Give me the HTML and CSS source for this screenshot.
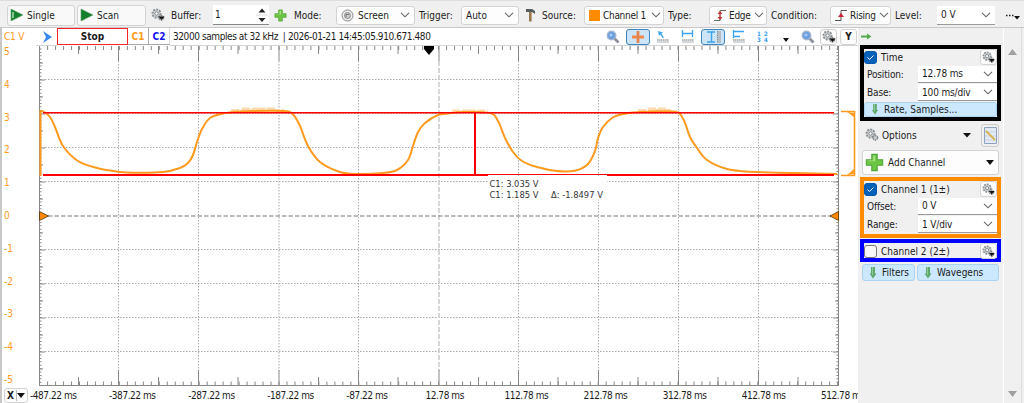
FILE: index.html
```html
<!DOCTYPE html>
<html lang="en">
<head>
  <meta charset="UTF-8">
  <meta name="viewport" content="width=device-width, initial-scale=1.0">
  <title>Scope</title>
  <link rel="stylesheet" href="styles.css">
</head>
<body>
  <svg class="defs">
    <symbol id="gear" viewBox="0 0 14 14">
      <circle cx="5.5" cy="5.5" r="4" fill="#d5d8da" stroke="#8c9296" stroke-width="2" stroke-dasharray="2 1"/>
      <circle cx="5.5" cy="5.5" r="1.7" fill="#fff" stroke="#7c8286"/>
      <circle cx="10.3" cy="9.8" r="2.3" fill="#ccc" stroke="#80868a" stroke-width="1.5" stroke-dasharray="1.5 .8"/>
    </symbol>
    <symbol id="gear-menu" viewBox="0 0 14 14">
      <use href="#gear"/>
      <path d="M7.5 8.5h6L10.5 12z" fill="#111"/>
    </symbol>
    <symbol id="chev" viewBox="0 0 10 6">
      <path d="M1 .8l4 4 4-4" fill="none" stroke="#666" stroke-width="1.1"/>
    </symbol>
    <symbol id="plus" viewBox="0 0 14 14">
      <path d="M5 1h4v4h4v4H9v4H5V9H1V5h4z" fill="#6cc644" stroke="#4fa53a" stroke-width=".8"/>
      <path d="M6 2h1.5v4H2V5.6h4z" fill="#a6e384"/>
    </symbol>
    <symbol id="down" viewBox="0 0 8 12">
      <path d="M2 0h4v6.5h1.5L4 11.5.5 6.5H2z" fill="#5fa86c"/>
      <path d="M3 0h1v8H3z" fill="#93cb9c"/>
    </symbol>
    <symbol id="lens" viewBox="0 0 14 14">
      <path d="M8.5 8.5l4 4" stroke="#8a8f98" stroke-width="2.6"/>
      <circle cx="5.5" cy="5.5" r="4.2" fill="#6a9de0" stroke="#a3b6cf" stroke-width="1.5"/>
      <circle cx="5" cy="5" r="1.6" fill="#a9cbf5"/>
    </symbol>
    <symbol id="play" viewBox="0 0 14 12">
      <path d="M1 0l12 6-12 6z" fill="#15802b" stroke="#5b9b66" stroke-width=".6"/>
    </symbol>
    <symbol id="ruler" viewBox="0 0 12 4">
      <path d="M0 0h12v4H0z" fill="#d5d8da"/>
      <path d="M0 1h12" stroke="#bbb" stroke-width="2" stroke-dasharray="1 1"/>
    </symbol>
  </svg>

  <div class="toolbar">
    <button class="btn single"><svg width="14" height="12"><use href="#play"/><path d="M3 3v6" stroke="#fff"/></svg>Single</button>
    <button class="btn scan"><svg width="14" height="12"><use href="#play"/></svg>Scan</button>
    <svg class="gear" width="14" height="14"><use href="#gear-menu"/></svg>
    <label class="l-buffer">Buffer:</label>
    <div class="spin"><span>1</span>
      <svg width="12" height="20"><path d="M2.5 7.5L6 3.5l3.5 4zM2.5 13L6 17l3.5-4z" fill="#222"/><path d="M0 10h12" stroke="#ddd"/></svg>
    </div>
    <svg class="add" width="13" height="13"><use href="#plus"/></svg>
    <label class="l-mode">Mode:</label>
    <div class="combo screen">
      <svg width="13" height="13"><circle cx="6.5" cy="6.5" r="5.5" fill="#eee" stroke="#888"/><circle cx="6.5" cy="6.5" r="3" fill="#ccc" stroke="#888"/><path d="M5 8V5.5h3" fill="none" stroke="#777"/></svg>
      <span>Screen</span><svg class="chev"><use href="#chev"/></svg>
    </div>
    <label class="l-trigger">Trigger:</label>
    <div class="combo auto"><span>Auto</span><svg class="chev"><use href="#chev"/></svg></div>
    <svg class="hammer" width="11" height="14"><path d="M1 1h6l3 2v3L7 4H1z" fill="#555c5c"/><path d="M4 4h2.6v9.5H4z" fill="#98764e"/></svg>
    <label class="l-source">Source:</label>
    <div class="combo source"><i class="swatch"></i><span>Channel 1</span><svg class="chev"><use href="#chev"/></svg></div>
    <label class="l-type">Type:</label>
    <div class="combo edge">
      <svg width="12" height="13"><path d="M0 11.5h6v-10h6" fill="none" stroke="#666"/><path d="M3.500 5L6 2l2.500 3zM3.500 8L6 11l2.500-3z" fill="#c33"/><path d="M6 3v7" stroke="#c33"/></svg>
      <span>Edge</span><svg class="chev"><use href="#chev"/></svg>
    </div>
    <label class="l-cond">Condition:</label>
    <div class="combo rising">
      <svg width="12" height="13"><path d="M0 11.5h6v-10h6" fill="none" stroke="#555"/><path d="M3 8l3-4 3 4z" fill="#c23"/></svg>
      <span>Rising</span><svg class="chev"><use href="#chev"/></svg>
    </div>
    <label class="l-level">Level:</label>
    <div class="combo level field"><span>0 V</span><svg class="chev"><use href="#chev"/></svg></div>
    <svg class="more" width="14" height="10"><path d="M0 5.5h1.5M3 5.5h1.5M6 5.5h1.5" stroke="#222" stroke-width="1.5"/><path d="M8 6h6l-3 3.5z" fill="#111"/></svg>
  </div>

  <div class="main">
    <div class="scope">
      <div class="status">
        <span class="unit">C1 V</span>
        <svg class="arrow" width="10" height="12"><path d="M0 0l9 6-9 6 3-6z" fill="#3a8af0"/></svg>
        <div class="stop">Stop</div>
        <div class="tab c1">C1</div>
        <div class="tab c2">C2</div>
        <span class="info">32000 samples at 32 kHz&nbsp; | 2026-01-21 14:45:05.910.671.480</span>
        <div class="tools">
          <svg width="14" height="14"><use href="#lens"/></svg>
          <span class="on"><svg width="14" height="14"><path d="M5.6 1h2.8v4.6H13v2.8H8.4V13H5.6V8.4H1V5.6h4.6z" fill="#f08848"/><path d="M7 1v12" stroke="#c08060" stroke-width=".6"/></svg></span>
          <svg class="t1" width="13" height="13"><path d="M2 1l5 1.5-1.7 1L8 7.5 6.7 8 4.3 4.5 3 6z" fill="#3ba4ec"/><use href="#ruler" x="1" y="9" width="12" height="4"/></svg>
          <svg class="t2" width="13" height="13"><path d="M1.5 0v7M11.5 0v7M2 3.5h9" stroke="#3ba4ec" stroke-width="1.3"/><use href="#ruler" x="1" y="9" width="12" height="4"/></svg>
          <span class="on t3"><svg width="15" height="14"><path d="M1 2h8M1 12h8M5.5 2v10" stroke="#3ba4ec" stroke-width="1.4"/><path d="M11 1h4v12h-4z" fill="#b4bcc4"/><path d="M11.5 1v12" stroke="#8b949c" stroke-dasharray="1 1"/></svg></span>
          <svg class="t4" width="13" height="13"><path d="M1.5 0v8M2 1.5h10M2 6.5h6" stroke="#3ba4ec" stroke-width="1.3"/><use href="#ruler" x="1" y="9" width="12" height="4"/></svg>
          <span class="nums"><b>1</b><b>2</b><b>3</b><b>4</b></span>
          <svg class="drop" width="6" height="4"><path d="M0 0h6L3 4z" fill="#111"/></svg>
          <svg class="t5" width="14" height="14"><use href="#lens"/></svg>
          <span class="mini"><svg width="14" height="14"><use href="#gear-menu"/></svg></span>
          <span class="mini y">Y</span>
        </div>
      </div>

      <div class="plot">
        <div class="y-axis">
          <span>5</span><span>4</span><span>3</span><span>2</span><span>1</span><span>0</span><span>-1</span><span>-2</span><span>-3</span><span>-4</span><span>-5</span>
        </div>
        <svg class="graph" width="822" height="343" viewBox="36 45 822 343">
          <path d="M36 45.5h21M170 45.5h688" stroke="#d4d4d4"/>
          <!-- dotted divisions -->
          <g stroke="#aaa" stroke-dasharray="1.5 1.5">
            <path d="M118.5 61v310M198.5 61v310M279 61v310M358.5 61v310M518.5 61v310M598.5 61v310M678.5 61v310M758.5 61v310"/>
            <path d="M45 79.5h788M45 113.5h788M45 147.5h788M45 181.5h788M45 249.5h788M45 283.5h788M45 317.5h788M45 351.5h788"/>
          </g>
          <path d="M439 61v310" stroke="#ccc" stroke-width="1.6" stroke-dasharray="5 2"/>
          <path d="M48 216h786" stroke="#a4a4a4" stroke-width="1.4" stroke-dasharray="4.5 2"/>
          <!-- ticks -->
          <g stroke="#888">
            <path d="M39.5 46v340M838.5 46v340M39 385.5h800" fill="none"/>
            <path d="M39.1 48h800M39.1 383.5h800" stroke-width="4" stroke-dasharray="1 6.98"/>
            <path d="M78.5 46v8M158.5 46v8M238 46v8M318.5 46v8M398 46v8M478.5 46v8M558 46v8M638 46v8M718 46v8M798 46v8"/>
            <path d="M78.5 377v8M158.5 377v8M238 377v8M318.5 377v8M398 377v8M478.5 377v8M558 377v8M638 377v8M718 377v8M798 377v8"/>
            <path d="M118.5 46v15M198.5 46v15M279 46v15M358.5 46v15M439 46v15M518.5 46v15M598.5 46v15M678.5 46v15M758.5 46v15"/>
            <path d="M118.5 370v15M198.5 370v15M279 370v15M358.5 370v15M439 370v15M518.5 370v15M598.5 370v15M678.5 370v15M758.5 370v15"/>
            <path d="M40.5 48.5v337M837.5 48.5v337" stroke-width="2" stroke-dasharray="1 2.4"/>
            <path d="M41.5 62.5v323M836.5 62.5v323" stroke-width="3" stroke-dasharray="1 33"/>
            <path d="M42.5 79.5v306M835.5 79.5v306" stroke-width="5" stroke-dasharray="1 33"/>
          </g>
          <!-- noise on the crests -->
          <g stroke="#ffd9ad" stroke-width="2" stroke-dasharray="8 2 14 1">
            <path d="M231 110h53M242 108.5h33M452 110.5h36M638 110h35M648 108.5h18"/>
          </g>
          <path d="M40.5 110v66" stroke="#ff9a1f" stroke-width="2"/>
          <path id="wave" fill="none" stroke="#ff9a1f" stroke-width="2"/>
          <path d="M43 112.7h791" stroke="#f00" stroke-width="1.6"/>
          <path d="M43 175h445M607 175h227" stroke="#f00" stroke-width="2"/>
          <path d="M488 174.5h119" stroke="#f00"/>
          <path d="M475 113v62" stroke="#f00" stroke-width="2"/>
          <path d="M841 111.5h13.5v64H841" fill="none" stroke="#ff9a1f" stroke-width="1.6"/>
          <path d="M847 112l7 1v4zM847 175l7-1v-5z" fill="#ff9a1f"/>
          <path d="M39.5 211.5v9l9-4.5zM838.5 211.5v9l-8.500-4.500z" fill="#f80" stroke="#553408" stroke-width=".8"/>
          <path d="M424 46h10v3l-5 6-5-6z"/>
          <g class="cursor-text">
            <rect x="488" y="176" width="119" height="24" fill="#fff"/>
            <text x="489.500" y="186.500">C1: 3.035 V</text>
            <text x="489.500" y="198">C1: 1.185 V</text>
            <text x="551" y="198">Δ: -1.8497 V</text>
          </g>
        </svg>
      </div>

      <div class="x-axis">
        <button class="x-btn"><span>X</span><svg width="8" height="5"><path d="M0 0h8L4 5z" fill="#111"/></svg></button>
        <div class="x-labels">
          <span>-487.22 ms</span><span>-387.22 ms</span><span>-287.22 ms</span><span>-187.22 ms</span><span>-87.22 ms</span><span>12.78 ms</span><span>112.78 ms</span><span>212.78 ms</span><span>312.78 ms</span><span>412.78 ms</span><span>512.78 ms</span>
        </div>
      </div>
    </div>

    <div class="side">
      <svg class="go" width="11" height="7"><path d="M0 2.500h6V.5l4.500 3L6 6.500v-2H0z" fill="#55a94e"/></svg>
      <div class="box time">
        <div class="head"><i class="check on"><svg width="11" height="11"><path d="M2.500 5.500l2 2L8.500 3.500" fill="none" stroke="#fff"/></svg></i>Time<span class="mini"><svg width="13" height="13"><use href="#gear-menu"/></svg></span></div>
        <div class="row"><label>Position:</label><div class="combo field"><span>12.78 ms</span><svg class="chev"><use href="#chev"/></svg></div></div>
        <div class="row"><label>Base:</label><div class="combo field"><span>100 ms/div</span><svg class="chev"><use href="#chev"/></svg></div></div>
        <button class="blue rate"><svg width="8" height="11"><use href="#down"/></svg>Rate, Samples...</button>
      </div>
      <div class="options">
        <svg width="14" height="14"><use href="#gear"/></svg><span>Options</span>
        <svg class="drop" width="8" height="5"><path d="M0 0h8L4 4.500z" fill="#111"/></svg>
        <span class="note"><svg width="13" height="17"><path d="M.5.5h12v16H.5z" fill="#e4eaf4" stroke="#8fa2bf"/><path d="M1 5h11M1 9h11M1 13h11" stroke="#c8d3e4"/><path d="M2 4l9 9" stroke="#d9b44a" stroke-width="1.8"/></svg></span>
      </div>
      <button class="add-channel"><svg width="19" height="19"><use href="#plus"/></svg><span>Add Channel</span><svg width="8" height="5"><path d="M0 0h8L4 5z" fill="#111"/></svg></button>
      <div class="box ch1">
        <div class="head"><i class="check on"><svg width="11" height="11"><path d="M2.500 5.500l2 2L8.500 3.500" fill="none" stroke="#fff"/></svg></i>Channel 1 (1±)<span class="mini"><svg width="13" height="13"><use href="#gear-menu"/></svg></span></div>
        <div class="row"><label>Offset:</label><div class="combo field"><span>0 V</span><svg class="chev"><use href="#chev"/></svg></div></div>
        <div class="row"><label>Range:</label><div class="combo field"><span>1 V/div</span><svg class="chev"><use href="#chev"/></svg></div></div>
      </div>
      <div class="box ch2">
        <div class="head"><i class="check"></i>Channel 2 (2±)<span class="mini"><svg width="13" height="13"><use href="#gear-menu"/></svg></span></div>
      </div>
      <div class="pair">
        <button class="blue"><svg width="8" height="12"><use href="#down"/></svg>Filters</button>
        <button class="blue wide"><svg width="8" height="12"><use href="#down"/></svg>Wavegens</button>
      </div>
    </div>
    <div class="scroll">
      <svg width="9" height="6"><path d="M0 6l4.500-6L9 6z" fill="#a0a0a0"/></svg>
      <svg width="9" height="6"><path d="M0 0h9L4.500 6z" fill="#a0a0a0"/></svg>
    </div>
  </div>
  <script src="script.js"></script>
</body>
</html>
```
FILE: styles.css
```css
* {
  box-sizing: border-box;
}
body {
  margin: 0;
  width: 1024px;
  height: 403px;
  display: flex;
  flex-direction: column;
  overflow: hidden;
  background: #f0f0f0;
  font-family: "DejaVu Sans Condensed", "DejaVu Sans", sans-serif;
  font-stretch: condensed;
  font-size: 10px;
  color: #1c1c1c;
}
svg {
  display: block;
  flex: none;
}
.defs {
  position: absolute;
  width: 0;
  height: 0;
}
button {
  font: inherit;
  color: inherit;
  padding: 0;
  border: 1px solid #d3d3d3;
  border-radius: 3px;
  background: #fdfdfd;
  display: flex;
  align-items: center;
}
label {
  flex: none;
  white-space: nowrap;
}

/* Toolbar */
.toolbar {
  height: 28px;
  flex: none;
  display: flex;
  align-items: center;
  padding: 2px 0 0 7px;
  border-top: 1px solid #ddd;
  border-bottom: 1px solid #c8c8c8;
}
.btn {
  height: 21px;
  width: 68px;
  padding-left: 2px;
  gap: 3px;
  background: #f9f9f9;
}
.scan { margin-left: 2px; width: 69px; }
.gear { margin-left: 5px; }
.l-buffer { margin-left: 6px; width: 42px; }
.spin {
  width: 56px;
  height: 20px;
  padding: 0 1px 0 2px;
  display: flex;
  align-items: center;
  justify-content: space-between;
  background: #fff;
  border-bottom: 1px solid #888;
}
.add { margin-left: 5px; }
.l-mode { margin-left: 7px; width: 42px; }
.l-trigger { margin-left: 4px; width: 42px; }
.hammer { margin-left: 6px; }
.l-source { margin-left: 6px; width: 42px; }
.l-type { margin-left: 4px; width: 41px; }
.l-cond { margin-left: 4px; width: 59px; }
.l-level { margin-left: 4px; width: 42px; }
.combo {
  flex: none;
  height: 19px;
  display: flex;
  align-items: center;
  gap: 4px;
  padding: 0 4px 0 4px;
  background: #fdfdfd;
  border: 1px solid #d3d3d3;
  border-radius: 3px;
}
.combo span {
  flex: 1;
  white-space: nowrap;
}
.chev {
  width: 10px;
  height: 6px;
}
.field {
  background: #fff;
  border: 0;
  border-bottom: 1px solid #999;
  border-radius: 0;
}
.screen { width: 79px; }
.auto { width: 58px; }
.source { width: 80px; }
.edge { width: 58px; }
.rising { width: 61px; }
.source,
.edge,
.rising {
  gap: 3px;
  padding-right: 2px;
  letter-spacing: -.3px;
}
.level { width: 58px; }
.swatch {
  flex: none;
  width: 11px;
  height: 11px;
  background: #ff8c00;
}
.more { margin-left: 11px; }

/* Main area */
.main {
  flex: 1;
  min-height: 0;
  display: flex;
}
.scope {
  width: 858px;
  display: flex;
  flex-direction: column;
  background: #fff;
  border-left: 2px solid #c8c8c8;
  overflow: hidden;
}
.status {
  height: 17px;
  flex: none;
  display: flex;
  align-items: center;
}
.unit {
  width: 41px;
  padding-left: 2px;
  letter-spacing: -.2px;
  color: #ff9a1f;
}
.stop {
  width: 71px;
  height: 17px;
  margin-left: 4px;
  line-height: 16px;
  text-align: center;
  font-weight: bold;
  border: 1px solid #f22;
}
.tab {
  width: 21px;
  height: 17px;
  line-height: 17px;
  text-align: center;
  font-weight: bold;
  border-right: 1px solid #aaa;
  border-bottom: 1px solid #aaa;
}
.c1 { color: #ff9a1f; }
.c2 { color: #1414f0; border-right-color: #ddd; }
.info {
  width: 434px;
  padding-left: 3px;
  white-space: nowrap;
  letter-spacing: -.42px;
}
.tools {
  display: flex;
  align-items: center;
}
.on {
  width: 24px;
  height: 16px;
  display: flex;
  align-items: center;
  justify-content: center;
  border: 1px solid #3f86bd;
  border-radius: 3px;
  background: #cce4f7;
}
.tools > svg:first-child { margin-left: 2px; }
.tools > .on { margin-left: 6px; }
.tools .t1 { margin-left: 6px; }
.tools .t2 { margin-left: 12px; }
.tools > .t3 { margin-left: 7px; }
.tools .t4 { margin-left: 7px; }
.nums {
  width: 14px;
  margin-left: 12px;
  display: grid;
  grid-template-columns: 1fr 1fr;
  font-size: 6px;
  line-height: 6px;
  color: #2b9cf0;
}
.drop { margin: 7px 0 0 12px; }
.t5 { margin: 0 5px 0 12px; }
.mini {
  width: 17px;
  height: 16px;
  display: flex;
  align-items: center;
  justify-content: center;
  border: 1px solid #d3d3d3;
  border-radius: 3px;
  background: #fdfdfd;
}
.y {
  margin-left: 3px;
  font-weight: bold;
}

/* Graph */
.plot {
  display: flex;
  height: 343px;
  flex: none;
}
.y-axis {
  width: 34px;
  padding: 1px 0 0 2px;
  color: #ff9a1f;
}
.y-axis span {
  display: block;
  height: 32.8px;
  line-height: 12px;
}
.cursor-text {
  font-size: 9.3px;
  fill: #333;
}
.x-axis {
  flex: 1;
  display: flex;
}
.x-btn {
  width: 24px;
  height: 15px;
  margin: 0 0 0 2px;
  padding: 0 2px;
  justify-content: space-between;
  font-weight: bold;
}
.x-btn span {
  padding-right: 2px;
  border-right: 1px solid #bbb;
}
.x-labels {
  display: flex;
  margin-left: 2px;
  padding-top: 2px;
  letter-spacing: -.45px;
}
.x-labels span {
  flex: none;
  width: 79.1px;
  white-space: nowrap;
}

/* Side panel */
.side {
  width: 145px;
  padding: 0 2px;
  display: flex;
  flex-direction: column;
}
.go { margin: 5px 0 5px 1px; }
.box {
  width: 141px;
  border: 4px solid #000;
}
.time { height: 76px; }
.ch1 {
  height: 61px;
  margin-top: 2px;
  border-color: #ff8c00;
}
.ch2 {
  height: 23px;
  margin-top: 1px;
  border-color: #00f;
}
.head {
  height: 16px;
  display: flex;
  align-items: center;
}
.head .mini { margin-left: auto; }
.check {
  width: 13px;
  height: 13px;
  margin-right: 4px;
  border: 1px solid #777;
  border-radius: 3px;
  background: #f8f8f8;
}
.check.on {
  border-color: #0058b0;
  background: #0560b8;
}
.row {
  height: 18.5px;
  display: flex;
  align-items: center;
  justify-content: space-between;
  padding-left: 3px;
  letter-spacing: -.15px;
}
.row .combo {
  width: 79px;
  height: 17px;
}
.blue {
  height: 17px;
  padding-left: 6px;
  gap: 5px;
  background: #cce8ff;
  border-color: #a9d3f2;
}
.rate {
  width: 133px;
  height: 15px;
}
.options {
  height: 27px;
  display: flex;
  align-items: center;
  padding: 1px 2px 0 5px;
}
.options span { margin-left: 3px; }
.options .drop { margin: 0 0 0 auto; }
.options .note {
  width: 18px;
  height: 23px;
  margin-left: 10px;
  display: flex;
  align-items: center;
  justify-content: center;
  border: 1px solid #ccc;
  border-radius: 3px;
}
.add-channel {
  width: 137px;
  height: 25px;
  margin: 2px 0 0 2px;
  padding: 0 4px 0 2px;
  gap: 4px;
}
.add-channel span {
  flex: 1;
  text-align: left;
}
.pair {
  display: flex;
  gap: 2px;
  padding: 2px 0 0 2px;
}
.pair .blue { width: 53px; }
.pair .wide { width: 82px; }
.scroll {
  width: 19px;
  display: flex;
  flex-direction: column;
  justify-content: space-between;
  align-items: center;
  padding: 21px 0 6px;
  border-left: 1px solid #fff;
  border-right: 1px solid #ddd;
}
```
FILE: script.js
```js
// sampled trace, smoothed into one path
const pts = [
  [40, 111], [44, 112], [50, 117], [55, 127], [63, 146], [78, 161], [97, 168], [118, 171.7], [135, 172.7],
  [163, 172], [180, 168], [188, 163], [193, 155], [197, 142], [202, 129], [210, 118], [223, 113.5],
  [240, 111.5], [283, 111], [293, 114.5], [300, 126], [308, 146], [320, 162], [340, 172], [357, 174],
  [383, 173], [397, 170], [408, 160], [413, 146], [418, 132], [425, 123], [438, 115], [448, 113.5],
  [463, 112], [490, 113], [498, 121], [505, 138], [513, 152], [522, 161], [537, 167], [557, 171],
  [575, 170.7], [588, 164], [595, 151], [598, 138], [603, 127], [612, 118], [623, 114], [640, 112],
  [673, 111.5], [680, 114], [685, 123], [690, 137], [697, 148], [707, 160], [727, 169], [750, 171.7],
  [777, 172.7], [837, 174]
];

let d = 'M' + pts[0];
for (let i = 0; i < pts.length - 1; i++) {
  const a = pts[i - 1] || pts[i];
  const b = pts[i];
  const c = pts[i + 1];
  const e = pts[i + 2] || c;
  d += 'C' + [b[0] + (c[0] - a[0]) / 6, b[1] + (c[1] - a[1]) / 6,
    c[0] - (e[0] - b[0]) / 6, c[1] - (e[1] - b[1]) / 6, c[0], c[1]].join(' ');
}
document.getElementById('wave').setAttribute('d', d);
```
